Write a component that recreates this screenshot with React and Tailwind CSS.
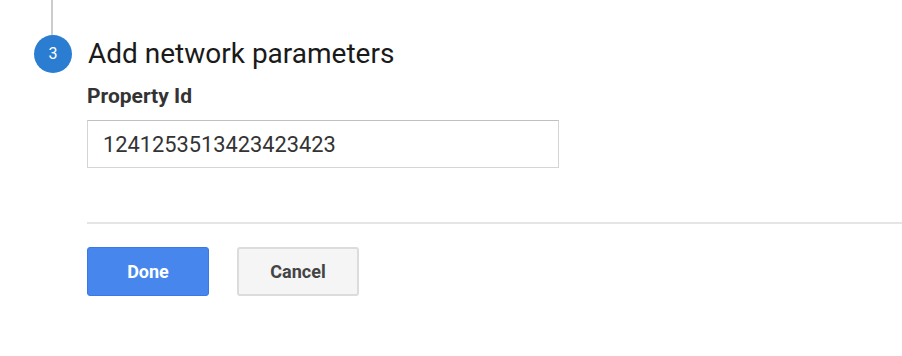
export default function App() {
  return (
    <div className="min-h-screen bg-white pl-[34px] font-['Roboto',sans-serif]">
      {/* connector from previous step */}
      <div className="ml-[17px] h-[35px] w-[2px] bg-[#cccccc]" />

      {/* step header */}
      <div className="flex items-center gap-[16px]">
        <div className="flex h-[38px] w-[38px] items-center justify-center rounded-full bg-[#2a7dd1] text-[16px] text-white">
          3
        </div>
        <h2 className="text-[28px] leading-[32px] text-[#1a1a1a]">Add network parameters</h2>
      </div>

      {/* step body */}
      <div className="ml-[53px]">
        <label className="mt-[10px] block text-[21px] font-bold leading-[26px] text-[#333333]">Property Id</label>
        <input
          type="text"
          defaultValue="1241253513423423423"
          className="mt-[11px] block h-[48px] w-[472px] border border-[#d5d5d5] border-t-[#c0c0c0] px-[15px] text-[21.8px] text-[#333333] outline-none"
        />

        <div className="mt-[54px] h-[2px] bg-[#e5e5e5]" />

        <div className="mt-[23px] flex gap-[28px]">
          <button className="h-[49px] w-[122px] rounded-[3px] border border-[#3b78e7] bg-[#4787ed] text-[18px] font-bold text-white">
            Done
          </button>
          <button className="h-[49px] w-[122px] rounded-[3px] border-2 border-[#dcdcdc] bg-[#f5f5f5] text-[18px] font-bold text-[#444444]">
            Cancel
          </button>
        </div>
      </div>
    </div>
  )
}
